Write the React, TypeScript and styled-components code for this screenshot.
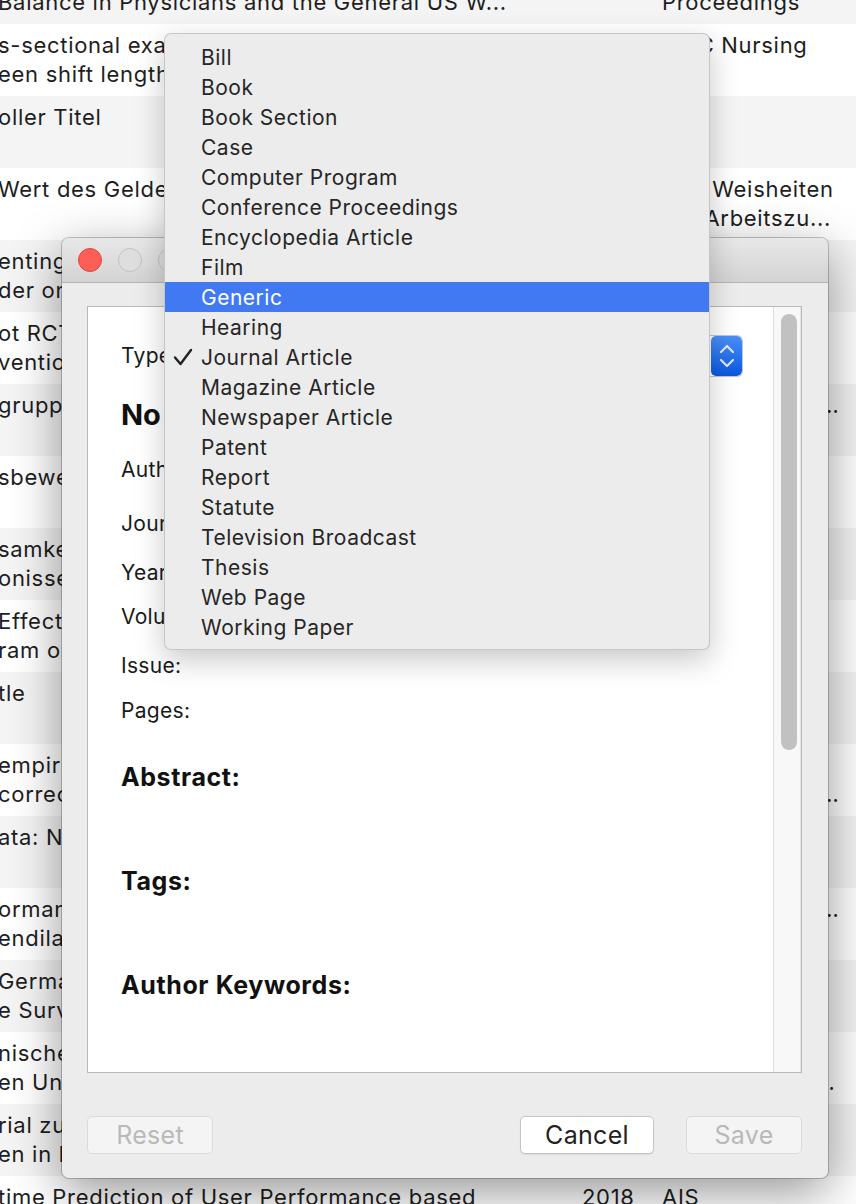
import React, { FC } from "react";
import styled, { createGlobalStyle } from "styled-components";

const GlobalStyle = createGlobalStyle`
  html, body {
    margin: 0;
    padding: 0;
  }
  body {
    font-family: Inter, "Noto Sans", "Liberation Sans", sans-serif;
    color: #1e1e1e;
    background: #ffffff;
    overflow: hidden;
  }
`;

type LibRow = {
  title: [string, string?];
  year?: string;
  source?: [string?, string?];
};

// library list behind the dialog, scrolled down and to the right
const libRows: LibRow[] = [
  { title: ["Work-Life Integration: Burnout and Satisfaction", "Balance in Physicians and the General US W..."], source: ["Conference", "Proceedings"] },
  { title: ["s-sectional examination of the association betw", "een shift length and nurses' reports"], source: ["BMC Nursing"] },
  { title: ["oller Titel"] },
  { title: ["Wert des Geldes", ""], source: ["Alte Weisheiten", "zur Arbeitszu..."] },
  { title: ["enting a framework", "der onboarding"] },
  { title: ["ot RCT of an", "vention"] },
  { title: ["gruppen"], source: ["Zeitschrift für Arbeitswissenschaft"] },
  { title: ["sbewertung"] },
  { title: ["samkeit und", "onisse"] },
  { title: ["Effects of a", "ram on"] },
  { title: ["tle"] },
  { title: ["empirischer Test", "corrected"], source: ["", "Zeitschrift für Organisationspsychologie"] },
  { title: ["ata: N"], source: ["", "Psychologische Rundschau"] },
  { title: ["ormanz", "endilatation"], source: ["Zeitschrift für Personalforschung"] },
  { title: ["German", "e Survey"] },
  { title: ["nische", "en Universität"], source: ["", "Wirtschaftsinformatik Proceedings"] },
  { title: ["rial zur", "en in kleinen"] },
  { title: ["time Prediction of User Performance based"], year: "2018", source: ["AIS"] },
];

const menuItems = [
  "Bill",
  "Book",
  "Book Section",
  "Case",
  "Computer Program",
  "Conference Proceedings",
  "Encyclopedia Article",
  "Film",
  "Generic",
  "Hearing",
  "Journal Article",
  "Magazine Article",
  "Newspaper Article",
  "Patent",
  "Report",
  "Statute",
  "Television Broadcast",
  "Thesis",
  "Web Page",
  "Working Paper",
];

const fields: { label: string; h: number }[] = [
  { label: "Authors:", h: 54 },
  { label: "Journal:", h: 49 },
  { label: "Year:", h: 44 },
  { label: "Volume:", h: 49 },
  { label: "Issue:", h: 45 },
  { label: "Pages:", h: 30 },
];

const CheckIcon: FC = () => (
  <svg width="20" height="18" viewBox="0 0 20 18">
    <path d="M2 9.5 L7.5 16 L18 2" fill="none" stroke="#222" strokeWidth="2.4" strokeLinecap="round" strokeLinejoin="round" />
  </svg>
);

const StepperIcon: FC = () => (
  <svg width="16" height="26" viewBox="0 0 16 26">
    <path d="M2 9 L8 3 L14 9" fill="none" stroke="#dfe9fd" strokeWidth="2.2" strokeLinecap="round" strokeLinejoin="round" />
    <path d="M2 17 L8 23 L14 17" fill="none" stroke="#dfe9fd" strokeWidth="2.2" strokeLinecap="round" strokeLinejoin="round" />
  </svg>
);

export default function App() {
  return (
    <>
      <GlobalStyle />
      <Screen>
        <Library>
          {libRows.map((row, i) => (
            <LibraryRow key={i} $odd={i % 2 === 1}>
              <TitleCell>
                <Line>{row.title[0]}</Line>
                {row.title[1] && <Line>{row.title[1]}</Line>}
              </TitleCell>
              <YearCell>{row.year && <Line>{row.year}</Line>}</YearCell>
              <SourceCell>
                <Line>{row.source?.[0] ?? ""}</Line>
                <Line>{row.source?.[1] ?? ""}</Line>
              </SourceCell>
            </LibraryRow>
          ))}
        </Library>

        <Dialog>
          <TitleBar>
            <Light $color="#fd5f57" $border="#e2463f" />
            <Light $color="#dedede" $border="#c2c2c2" />
            <Light $color="#dedede" $border="#c2c2c2" />
          </TitleBar>
          <DialogBody>
            <Panel>
              <PanelContent>
                <TypeRow>
                  <FieldLabel>Type:</FieldLabel>
                  <Select>
                    <SelectText>Journal Article</SelectText>
                    <Stepper>
                      <StepperIcon />
                    </Stepper>
                  </Select>
                </TypeRow>
                <RefTitle>No Title</RefTitle>
                <Fields>
                  {fields.map((f) => (
                    <FieldRow key={f.label} $h={f.h}>
                      <FieldLabel>{f.label}</FieldLabel>
                    </FieldRow>
                  ))}
                </Fields>
                <Section $first>
                  <SectionTitle>Abstract:</SectionTitle>
                </Section>
                <Section>
                  <SectionTitle>Tags:</SectionTitle>
                </Section>
                <Section>
                  <SectionTitle>Author Keywords:</SectionTitle>
                </Section>
              </PanelContent>
              <ScrollTrack>
                <ScrollThumb />
              </ScrollTrack>
            </Panel>
            <Footer>
              <Button $w={126} disabled>
                Reset
              </Button>
              <ButtonGroup>
                <Button $w={134}>Cancel</Button>
                <Button $w={116} disabled>
                  Save
                </Button>
              </ButtonGroup>
            </Footer>
          </DialogBody>
        </Dialog>

        <Menu>
          {menuItems.map((item) => (
            <MenuItem key={item} $active={item === "Generic"}>
              <CheckSlot>{item === "Journal Article" && <CheckIcon />}</CheckSlot>
              {item}
            </MenuItem>
          ))}
        </Menu>
      </Screen>
    </>
  );
}

const Screen = styled.div`
  position: relative;
  width: 856px;
  height: 1204px;
  overflow: hidden;
  background: #ffffff;
`;

const Library = styled.div`
  display: flex;
  flex-direction: column;
  margin-top: -48px;
`;

const LibraryRow = styled.div<{ $odd: boolean }>`
  display: grid;
  grid-template-columns: 582px 80px 178px;
  height: 72px;
  padding-top: 7px;
  box-sizing: border-box;
  background: ${(p) => (p.$odd ? "#ffffff" : "#f4f4f4")};
  font-size: 22px;
  letter-spacing: 0.7px;
  line-height: 29px;
  color: #1e1e1e;
`;

const TitleCell = styled.div`
  display: flex;
  flex-direction: column;
  overflow: hidden;
  margin-left: -2px;
`;

const YearCell = styled.div`
  display: flex;
  flex-direction: column;
`;

const SourceCell = styled.div`
  display: flex;
  flex-direction: column;
  overflow: hidden;
`;

const Line = styled.div`
  height: 29px;
  white-space: nowrap;
  overflow: hidden;
  text-overflow: ellipsis;
`;

const Dialog = styled.div`
  position: absolute;
  left: 62px;
  top: 238px;
  width: 766px;
  height: 940px;
  display: flex;
  flex-direction: column;
  background: #ececec;
  border-radius: 7px;
  box-shadow: 0 0 0 1px rgba(0, 0, 0, 0.22), 0 14px 50px rgba(0, 0, 0, 0.42);
  overflow: hidden;
`;

const TitleBar = styled.div`
  display: flex;
  align-items: center;
  gap: 16px;
  height: 44px;
  padding-left: 16px;
  flex-shrink: 0;
  background: linear-gradient(#e8e8e8, #d3d3d3);
  border-bottom: 1px solid #b6b6b6;
`;

const Light = styled.span<{ $color: string; $border: string }>`
  width: 22px;
  height: 22px;
  border-radius: 50%;
  background: ${(p) => p.$color};
  border: 1px solid ${(p) => p.$border};
`;

const DialogBody = styled.div`
  flex: 1;
  display: flex;
  flex-direction: column;
  padding: 23px 26px 24px 25px;
  min-height: 0;
`;

const Panel = styled.div`
  flex: 1;
  display: flex;
  background: #ffffff;
  border: 1px solid #b9b9b9;
  min-height: 0;
`;

const PanelContent = styled.div`
  flex: 1;
  padding: 29px 31px 0 33px;
  overflow: hidden;
`;

const TypeRow = styled.div`
  display: flex;
  align-items: center;
  gap: 20px;
  height: 40px;
`;

const FieldLabel = styled.div`
  font-size: 21px;
  letter-spacing: 0.3px;
  line-height: 30px;
  color: #1a1a1a;
`;

const Select = styled.div`
  flex: 1;
  display: flex;
  align-items: center;
  height: 40px;
  background: #ffffff;
  border-radius: 5px;
  box-shadow: 0 0 0 1px #c6c6c6, 0 1px 1px rgba(0, 0, 0, 0.1);
  overflow: hidden;
`;

const SelectText = styled.span`
  flex: 1;
  padding-left: 12px;
  font-size: 21px;
`;

const Stepper = styled.div`
  width: 31px;
  height: 40px;
  display: flex;
  align-items: center;
  justify-content: center;
  border-radius: 5px;
  background: linear-gradient(#4a90f9, #0a57e0);
`;

const RefTitle = styled.div`
  margin-top: 21px;
  font-size: 29px;
  line-height: 36px;
  font-weight: 700;
  color: #111;
`;

const Fields = styled.div`
  display: flex;
  flex-direction: column;
  margin-top: 22px;
`;

const FieldRow = styled.div<{ $h: number }>`
  height: ${(p) => p.$h}px;
`;

const Section = styled.div<{ $first?: boolean }>`
  height: 104px;
  margin-top: ${(p) => (p.$first ? "35px" : "0")};
`;

const SectionTitle = styled.div`
  font-size: 25px;
  letter-spacing: 0.6px;
  line-height: 32px;
  font-weight: 700;
  color: #111;
`;

const ScrollTrack = styled.div`
  width: 28px;
  flex-shrink: 0;
  padding: 7px 0 0 7px;
  box-sizing: border-box;
  background: #f8f8f8;
  border-left: 1px solid #dedede;
  border-right: 1px solid #e6e6e6;
`;

const ScrollThumb = styled.div`
  width: 16px;
  height: 436px;
  border-radius: 8px;
  background: #c1c1c1;
`;

const Footer = styled.div`
  display: flex;
  justify-content: space-between;
  align-items: center;
  margin-top: 43px;
  height: 38px;
  flex-shrink: 0;
`;

const ButtonGroup = styled.div`
  display: flex;
  gap: 32px;
`;

const Button = styled.button<{ $w: number }>`
  width: ${(p) => p.$w}px;
  height: 38px;
  padding: 0;
  font-family: inherit;
  font-size: 25px;
  letter-spacing: 0.3px;
  color: #222;
  background: #ffffff;
  border: 1px solid #c4c4c4;
  border-radius: 5px;
  box-shadow: 0 1px 1px rgba(0, 0, 0, 0.08);

  &:disabled {
    color: #b9b9b9;
    background: #f4f4f4;
    border-color: #dadada;
    box-shadow: none;
  }
`;

const Menu = styled.div`
  position: absolute;
  left: 164px;
  top: 33px;
  width: 546px;
  height: 617px;
  box-sizing: border-box;
  padding: 8px 0 9px;
  background: #ececec;
  border: 1px solid rgba(0, 0, 0, 0.16);
  border-radius: 7px;
  box-shadow: 0 10px 30px rgba(0, 0, 0, 0.22);
`;

const MenuItem = styled.div<{ $active: boolean }>`
  display: flex;
  align-items: center;
  height: 30px;
  font-size: 21px;
  letter-spacing: 0.5px;
  color: ${(p) => (p.$active ? "#ffffff" : "#262626")};
  background: ${(p) => (p.$active ? "#4179f2" : "transparent")};
  white-space: nowrap;
`;

const CheckSlot = styled.span`
  width: 36px;
  display: flex;
  justify-content: center;
  align-items: center;
`;
